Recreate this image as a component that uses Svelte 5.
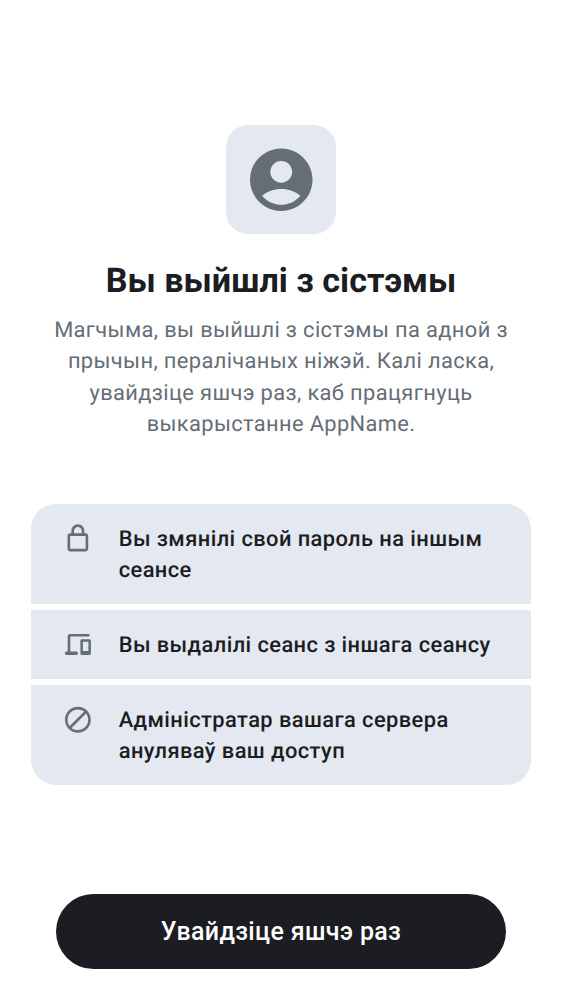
<script>
  const reasons = [
    { icon: 'lock', lines: ['Вы змянілі свой пароль на іншым', 'сеансе'] },
    { icon: 'devices', lines: ['Вы выдалілі сеанс з іншага сеансу'] },
    { icon: 'block', lines: ['Адміністратар вашага сервера', 'ануляваў ваш доступ'] }
  ];
  const icons = {
    lock: { box: '-.3 0 24 24', path: 'M18 8h-1V6c0-2.76-2.24-5-5-5S7 3.24 7 6v2H6c-1.1 0-2 .9-2 2v10c0 1.1.9 2 2 2h12c1.1 0 2-.9 2-2V10c0-1.1-.9-2-2-2zM9 6c0-1.66 1.34-3 3-3s3 1.34 3 3v2H9V6zm9 14H6V10h12v10z' },
    devices: { box: '.2 0 31 31', path: 'M8.2 5H26.6a1.25 1.25 0 0 1 0 2.5H8.5V22.5H14.5a1.7 1.7 0 0 1 0 3.4H4.7a1.7 1.7 0 0 1 0-3.4H5.9V7.3C5.9 6 6.9 5 8.2 5zM20 10.2h7.7c.8 0 1.4.6 1.4 1.4v12.9c0 .8-.6 1.4-1.4 1.4H20c-.8 0-1.4-.6-1.4-1.4V11.6c0-.8.6-1.4 1.4-1.4zM21.1 12.7v9.4h5.5v-9.4z' },
    block: { box: '-.3 -.2 24 24', path: 'M12 2C6.48 2 2 6.48 2 12s4.48 10 10 10 10-4.48 10-10S17.52 2 12 2zM4 12c0-4.42 3.58-8 8-8 1.85 0 3.55.63 4.9 1.69L5.69 16.9C4.63 15.55 4 13.85 4 12zm8 8c-1.85 0-3.55-.63-4.9-1.69L18.31 7.1C19.37 8.45 20 10.15 20 12c0 4.42-3.58 8-8 8z' }
  };
</script>

<main>
  <header>
    <div class="avatar">
      <svg viewBox="2 1.87 20 20"><path d="M12 2C6.48 2 2 6.48 2 12s4.48 10 10 10 10-4.48 10-10S17.52 2 12 2zm0 4c1.93 0 3.5 1.57 3.5 3.5S13.93 13 12 13s-3.5-1.57-3.5-3.5S10.07 6 12 6zm0 14c-2.03 0-4.43-.82-6.14-2.88C7.55 15.8 9.68 15 12 15s4.45.8 6.14 2.12C16.43 19.18 14.03 20 12 20z" /></svg>
    </div>
    <h1>Вы выйшлі з сістэмы</h1>
    <p>Магчыма, вы выйшлі з сістэмы па адной з<br />прычын, пералічаных ніжэй. Калі ласка,<br />увайдзіце яшчэ раз, каб працягнуць<br />выкарыстанне AppName.</p>
  </header>
  <ul>
    {#each reasons as reason}
      <li>
        <svg viewBox={icons[reason.icon].box}><path fill-rule="evenodd" d={icons[reason.icon].path} /></svg>
        <div>{#each reason.lines as line}<span>{line}</span>{/each}</div>
      </li>
    {/each}
  </ul>
  <button>Увайдзіце яшчэ раз</button>
</main>

<style>
  :global(body) { margin: 0; background: #fff; }
  main {
    box-sizing: border-box;
    width: 562px;
    height: 1000px;
    padding: 125px 31px 31px;
    display: flex;
    flex-direction: column;
    font-family: Roboto, sans-serif;
    color: #1b1d22;
    text-rendering: geometricPrecision;
  }
  header { display: flex; flex-direction: column; align-items: center; }
  .avatar {
    width: 110px;
    height: 109px;
    border-radius: 22px;
    background: #e3e8f1;
    display: grid;
    place-items: center;
  }
  svg { fill: #656d77; display: block; flex-shrink: 0; overflow: visible; }
  .avatar svg { width: 62.5px; height: 62.5px; }
  h1 { margin: 27px 0 0; font-size: 34.15px; line-height: 40px; font-weight: 700; white-space: nowrap; }
  p {
    margin: 14px 0 0;
    font-size: 21.875px;
    line-height: 31.25px;
    letter-spacing: 0.36px;
    color: #656d77;
    text-align: center;
    white-space: nowrap;
  }
  ul {
    list-style: none;
    margin: 64px 0 0;
    padding: 0;
    display: flex;
    flex-direction: column;
    gap: 6px;
    border-radius: 25px;
    overflow: hidden;
  }
  li { display: flex; align-items: flex-start; gap: 25.7px; padding: 19px 31px 17.5px; background: #e3e8f1; }
  li svg { width: 31px; height: 31px; }
  li div { padding-top: 1px; }
  li span {
    display: block;
    font-size: 21.875px;
    line-height: 31.25px;
    font-weight: 500;
    letter-spacing: 0.42px;
    white-space: nowrap;
  }
  button {
    margin: auto 25px 0;
    height: 75px;
    border: 0;
    border-radius: 38px;
    background: #1b1d22;
    color: #fff;
    font: 500 25px/36px Roboto, sans-serif;
    letter-spacing: 0.34px;
    flex-shrink: 0;
  }
</style>
